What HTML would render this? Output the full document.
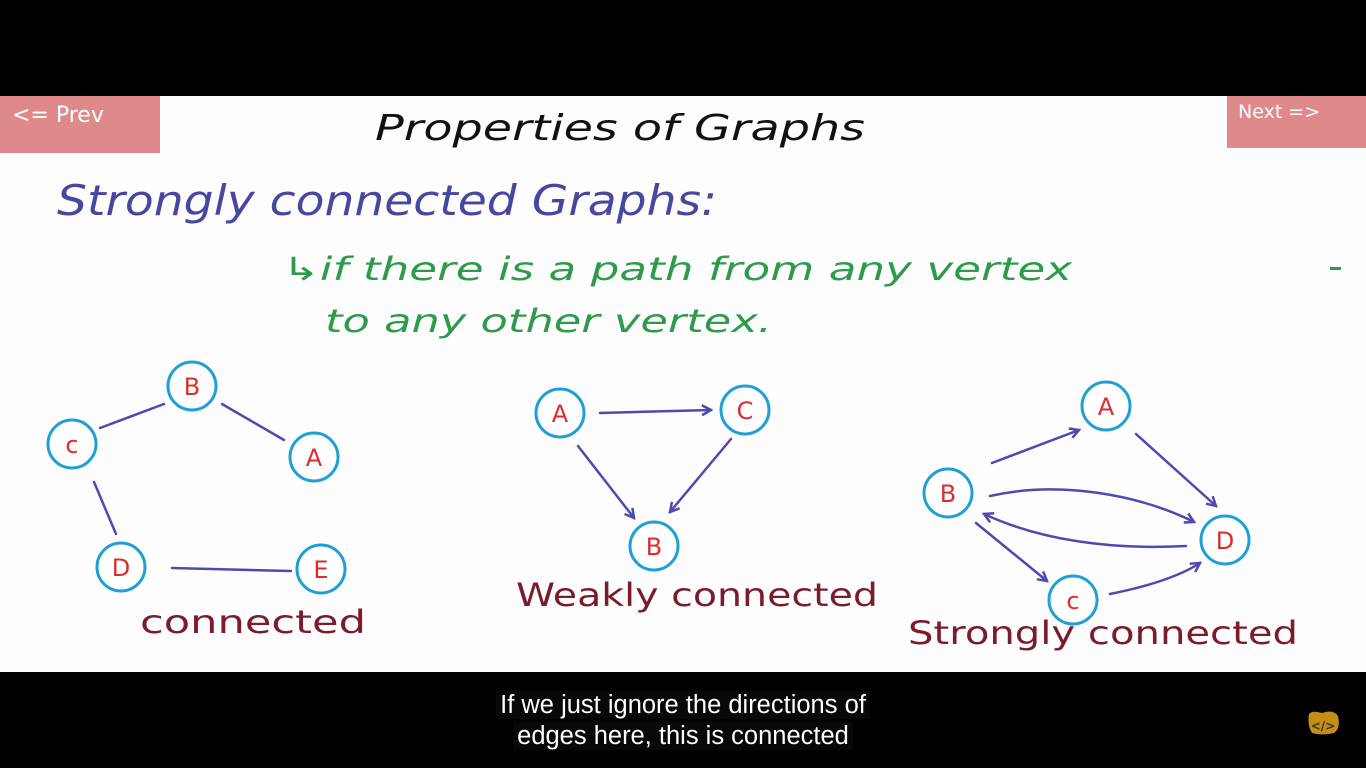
<!DOCTYPE html>
<html><head><meta charset="utf-8"><style>
html,body{margin:0;padding:0;width:1366px;height:768px;overflow:hidden;background:#000;font-family:"Liberation Sans",sans-serif}
#stage{position:absolute;left:0;top:96px;width:1366px;height:576px;background:#fdfdfd}
.btn{position:absolute;background:#de8a8b;color:#fff;font-family:"DejaVu Sans","Liberation Sans",sans-serif}
#sub{position:absolute;top:690px;left:0;width:1366px;text-align:center;color:#fff;font-size:25.5px;line-height:31px;font-family:"Liberation Sans",sans-serif}
#sub span{background:#080808;padding:0 4px}
</style></head><body>
<div id="stage"></div>
<div class="btn" style="left:0;top:96px;width:160px;height:57px;font-size:22px;"><div style="position:absolute;left:12px;top:7px">&lt;= Prev</div></div>
<div class="btn" style="left:1227px;top:96px;width:139px;height:52px;font-size:19px;"><div style="position:absolute;left:11px;top:5px">Next =&gt;</div></div>
<svg width="1366" height="768" style="position:absolute;left:0;top:0" font-family="DejaVu Sans, Liberation Sans, sans-serif">
<text x="375" y="140" font-size="36" textLength="490" lengthAdjust="spacingAndGlyphs" fill="#111" font-style="italic">Properties of Graphs</text>
<text x="57" y="215" font-size="42" textLength="660" lengthAdjust="spacingAndGlyphs" fill="#4747a0" font-style="italic">Strongly connected Graphs:</text>
<text x="282" y="280" font-size="32" textLength="790" lengthAdjust="spacingAndGlyphs" fill="#2e9a4c" font-style="italic">↳if there is a path from any vertex</text>
<text x="325" y="332" font-size="32" textLength="447" lengthAdjust="spacingAndGlyphs" fill="#2e9a4c" font-style="italic">to any other vertex.</text>
<rect x="1330" y="267" width="11" height="3" fill="#2e9a4c"/>
<text x="140" y="633" font-size="32" textLength="226" lengthAdjust="spacingAndGlyphs" fill="#7a1c2c">connected</text>
<text x="516" y="606" font-size="32" textLength="362" lengthAdjust="spacingAndGlyphs" fill="#7a1c2c">Weakly connected</text>
<text x="908" y="644" font-size="32" textLength="390" lengthAdjust="spacingAndGlyphs" fill="#7a1c2c">Strongly connected</text>
<defs><marker id="ar" markerWidth="12" markerHeight="12" refX="10" refY="6" orient="auto" markerUnits="userSpaceOnUse"><path d="M1,1 L10,6 L1,11" fill="none" stroke="#4f4aae" stroke-width="2.5"/></marker></defs>
<g stroke="#4f4aae" stroke-width="2.5" fill="none" stroke-linecap="round">
<path d="M100,428 L164,404"/><path d="M222,404 L284,440"/><path d="M94,482 L116,534"/><path d="M172,568 L291,571"/>
<path d="M600,413 L711,410" marker-end="url(#ar)"/><path d="M578,446 L634,518" marker-end="url(#ar)"/><path d="M731,439 L670,512" marker-end="url(#ar)"/>
<path d="M992,463 L1079,430" marker-end="url(#ar)"/><path d="M1136,434 L1216,506" marker-end="url(#ar)"/>
<path d="M990,496 C1060,480 1140,495 1194,522" marker-end="url(#ar)"/><path d="M1186,546 C1110,550 1040,540 984,514" marker-end="url(#ar)"/>
<path d="M976,523 L1047,581" marker-end="url(#ar)"/><path d="M1110,594 C1150,586 1180,576 1200,563" marker-end="url(#ar)"/>
</g>
<g stroke="#1ea0d6" stroke-width="3" fill="#fff">
<circle cx="192" cy="386" r="24"/><circle cx="72" cy="444" r="24"/><circle cx="314" cy="457" r="24"/><circle cx="121" cy="567" r="24"/><circle cx="321" cy="569" r="24"/>
<circle cx="560" cy="413" r="24"/><circle cx="745" cy="410" r="24"/><circle cx="654" cy="546" r="24"/>
<circle cx="1106" cy="406" r="24"/><circle cx="948" cy="493" r="24"/><circle cx="1225" cy="540" r="24"/><circle cx="1073" cy="600" r="24"/>
</g>
<g fill="#dd2c2c" font-size="24" text-anchor="middle">
<text x="192" y="395">B</text><text x="72" y="453">c</text><text x="314" y="466">A</text><text x="121" y="576">D</text><text x="321" y="578">E</text>
<text x="560" y="422">A</text><text x="745" y="419">C</text><text x="654" y="555">B</text>
<text x="1106" y="415">A</text><text x="948" y="502">B</text><text x="1225" y="549">D</text><text x="1073" y="609">c</text>
</g>
<path d="M1309,714 Q1312,710 1322,713 Q1333,709 1338,716 Q1341,728 1334,733 Q1322,736 1312,733 Q1307,725 1309,714Z" fill="#c48d16"/>
<text x="1323" y="730" font-size="12" fill="#333" text-anchor="middle" font-weight="bold">&lt;/&gt;</text>
</svg>
<div id="sub"><span>If we just ignore the directions of</span><br><span>edges here, this is connected</span></div>
</body></html>
